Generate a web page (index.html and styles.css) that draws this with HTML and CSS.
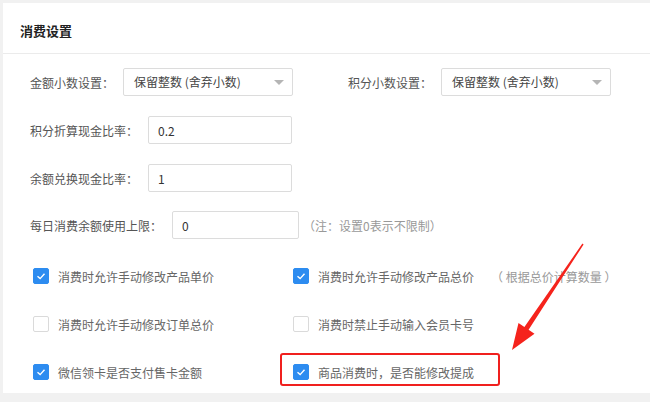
FILE: index.html
```html
<!DOCTYPE html>
<html>
<head>
  <meta charset="utf-8">
  <title>消费设置</title>
  <link rel="stylesheet" href="styles.css">
</head>
<body>
  <div class="panel">
    <div class="panel-head">消费设置</div>

    <div class="panel-body">
      <!-- decimal settings -->
      <div class="form-row">
        <div class="field">
          <label>金额小数设置：</label>
          <div class="select">保留整数 (舍弃小数)<span class="caret"></span></div>
        </div>
        <div class="field field-right">
          <label>积分小数设置：</label>
          <div class="select">保留整数 (舍弃小数)<span class="caret"></span></div>
        </div>
      </div>

      <div class="form-row">
        <label>积分折算现金比率：</label>
        <input type="text" class="text-input" value="0.2" />
      </div>

      <div class="form-row">
        <label>余额兑换现金比率：</label>
        <input type="text" class="text-input" value="1" />
      </div>

      <div class="form-row">
        <label>每日消费余额使用上限：</label>
        <input type="text" class="text-input input-short" value="0" />
        <span class="note">（注：设置0表示不限制）</span>
      </div>

      <!-- switches -->
      <div class="check-grid">
        <div class="check checked">
          <span class="box"><svg viewBox="0 0 16 16"><polyline points="4,8.2 7,11 12,5.5" /></svg></span>
          消费时允许手动修改产品单价
        </div>
        <div class="check checked">
          <span class="box"><svg viewBox="0 0 16 16"><polyline points="4,8.2 7,11 12,5.5" /></svg></span>
          消费时允许手动修改产品总价
          <span class="hint">（ 根据总价计算数量 ）</span>
        </div>
        <div class="check">
          <span class="box"></span>
          消费时允许手动修改订单总价
        </div>
        <div class="check">
          <span class="box"></span>
          消费时禁止手动输入会员卡号
        </div>
        <div class="check checked">
          <span class="box"><svg viewBox="0 0 16 16"><polyline points="4,8.2 7,11 12,5.5" /></svg></span>
          微信领卡是否支付售卡金额
        </div>
        <div class="check checked marked">
          <span class="box"><svg viewBox="0 0 16 16"><polyline points="4,8.2 7,11 12,5.5" /></svg></span>
          商品消费时，是否能修改提成
          <span class="mark-frame"></span>
        </div>
      </div>
    </div>

    <!-- annotation arrow -->
    <svg class="arrow" viewBox="0 0 100 125">
      <polygon points="93.6,9.4 38.6,94.8 44.5,98.8 22,115 28.5,88 34.4,92 92.4,8.6" />
    </svg>
  </div>
</body>
</html>
```

FILE: styles.css
```css
body {
  margin: 0;
  background: #f1f1f1;
  font-family: "Noto Sans CJK SC", "Microsoft YaHei", sans-serif;
  font-size: 12px;
  color: #555;
}

.panel {
  position: relative;
  margin: 3px 0 0 3px;
  height: 390px;
  background: #fff;
}

.panel-head {
  padding: 17px 0 11px 17px;
  line-height: 22px;
  font-size: 13px;
  font-weight: bold;
  color: #222;
  border-bottom: 1px solid #ebebeb;
}

.panel-body {
  padding: 14px 0 0 27px;
}

.form-row {
  display: flex;
  align-items: center;
  height: 28px;
  margin-bottom: 20px;
}

.form-row:nth-child(3) {
  margin-bottom: 19px;
}

.field {
  display: flex;
  align-items: center;
}

.field-right {
  margin-left: 55px;
}

label {
  margin-right: 9px;
  white-space: nowrap;
}

.select {
  position: relative;
  box-sizing: border-box;
  width: 170px;
  height: 28px;
  line-height: 26px;
  padding-left: 10px;
  border: 1px solid #dcdcdc;
  border-radius: 2px;
  color: #444;
}

.caret {
  position: absolute;
  right: 8px;
  top: 11px;
  width: 0;
  height: 0;
  border-left: 5px solid transparent;
  border-right: 5px solid transparent;
  border-top: 5px solid #b5b5b5;
}

.text-input {
  box-sizing: border-box;
  width: 144px;
  height: 28px;
  margin: 0 0 0 1px;
  padding: 0 9px;
  border: 1px solid #dcdcdc;
  border-radius: 2px;
  font-family: inherit;
  font-size: 12px;
  color: #333;
  outline: none;
}

.input-short {
  width: 127px;
}

.note {
  margin-left: 4px;
  color: #999;
}

.check-grid {
  display: grid;
  grid-template-columns: 260px 1fr;
  row-gap: 24px;
  margin: 25px 0 0 3px;
}

.check {
  position: relative;
  display: flex;
  align-items: center;
  height: 24px;
  color: #666;
  white-space: nowrap;
}

.box {
  box-sizing: border-box;
  width: 16px;
  height: 16px;
  margin-right: 9px;
  border: 1px solid #dadada;
  border-radius: 2px;
  background: #fff;
}

.check.checked .box {
  border-color: #2d8cf0;
  background: #2d8cf0;
}

.box svg {
  display: block;
  width: 14px;
  height: 14px;
}

.box polyline {
  fill: none;
  stroke: #fff;
  stroke-width: 1.6;
}

.hint {
  margin-left: 17px;
  color: #999;
}

.mark-frame {
  position: absolute;
  left: -13px;
  top: -7px;
  width: 216px;
  height: 29px;
  border: 2px solid #f0201e;
  border-radius: 3px;
}

.arrow {
  position: absolute;
  left: 487px;
  top: 232px;
  width: 100px;
  height: 125px;
}

.arrow polygon {
  fill: #f5231c;
}
```
